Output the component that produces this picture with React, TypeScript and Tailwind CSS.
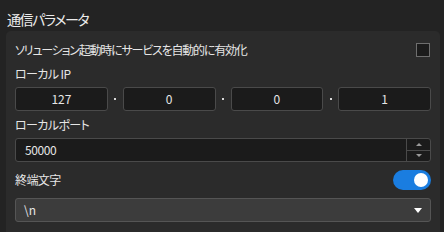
import { useState } from 'react'

const font = { fontFamily: '"Noto Sans CJK JP", "Noto Sans", sans-serif', fontFeatureSettings: '"palt"' }

function IpBox({ value }: { value: string }) {
  return (
    <div className="flex-1 h-[24px] rounded-[3px] border border-[#4a4a4a] bg-[#1b1b1b] flex items-center justify-center text-[12px] text-[#e6e6e6]">
      {value}
    </div>
  )
}

function Dot() {
  return (
    <div className="w-[15px] flex items-center justify-center">
      <span className="w-[2px] h-[2px] bg-[#d8d8d8]" />
    </div>
  )
}

export default function App() {
  const [enabled, setEnabled] = useState(true)
  const [autoStart, setAutoStart] = useState(false)

  return (
    <div className="w-[444px] h-[232px] bg-[#232323] text-[#e6e6e6] overflow-hidden" style={font}>
      <div className="h-[31px] pl-[7px] pt-[9px] text-[14px] leading-[20px] tracking-[-1.4px] text-[#ececec]">通信パラメータ</div>
      <div className="ml-[6px] mr-[4px] h-[201px] rounded-t-[5px] bg-[#2b2b2b] px-[9px] pt-[11px]">
        <div className="flex items-center justify-between h-[16px] pr-[1px]">
          <span className="text-[12px] leading-[16px] tracking-[-1.2px]">ソリューション起動時にサービスを自動的に有効化</span>
          <button
            type="button"
            onClick={() => setAutoStart(!autoStart)}
            className="w-[14px] h-[14px] border border-[#6e6e6e] bg-[#1b1b1b]"
          />
        </div>
        <div className="mt-[8px] h-[16px] text-[12px] leading-[16px] tracking-[-0.6px]">ローカル IP</div>
        <div className="mt-[5px] flex">
          <IpBox value="127" />
          <Dot />
          <IpBox value="0" />
          <Dot />
          <IpBox value="0" />
          <Dot />
          <IpBox value="1" />
        </div>
        <div className="mt-[6px] h-[16px] text-[12px] leading-[16px] tracking-[-0.6px]">ローカルポート</div>
        <div className="mt-[5px] h-[24px] rounded-[3px] border border-[#4a4a4a] bg-[#1b1b1b] flex">
          <div className="flex-1 pl-[9px] flex items-center text-[12px] tracking-[-0.4px]">50000</div>
          <div className="w-[24px] border-l border-[#4a4a4a] flex flex-col">
            <div className="flex-1 flex items-center justify-center border-b border-[#4a4a4a]">
              <span className="w-0 h-0 border-l-[3px] border-r-[3px] border-b-[3px] border-l-transparent border-r-transparent border-b-[#9a9a9a]" />
            </div>
            <div className="flex-1 flex items-center justify-center">
              <span className="w-0 h-0 border-l-[3px] border-r-[3px] border-t-[3px] border-l-transparent border-r-transparent border-t-[#9a9a9a]" />
            </div>
          </div>
        </div>
        <div className="mt-[8px] flex items-center justify-between h-[20px]">
          <span className="text-[12px] leading-[16px] tracking-[-0.6px]">終端文字</span>
          <button
            type="button"
            onClick={() => setEnabled(!enabled)}
            className={`w-[38px] h-[20px] rounded-full flex items-center px-[3px] ${enabled ? 'bg-[#1a7de0] justify-end' : 'bg-[#555] justify-start'}`}
          >
            <span className="w-[14px] h-[14px] rounded-full bg-white" />
          </button>
        </div>
        <div className="mt-[8px] h-[24px] rounded-[3px] border border-[#555555] bg-[#3c3c3c] flex items-center justify-between pl-[8px] pr-[8px]">
          <span className="text-[12px]">\n</span>
          <span className="w-0 h-0 border-l-[4px] border-r-[4px] border-t-[5px] border-l-transparent border-r-transparent border-t-white" />
        </div>
      </div>
    </div>
  )
}
